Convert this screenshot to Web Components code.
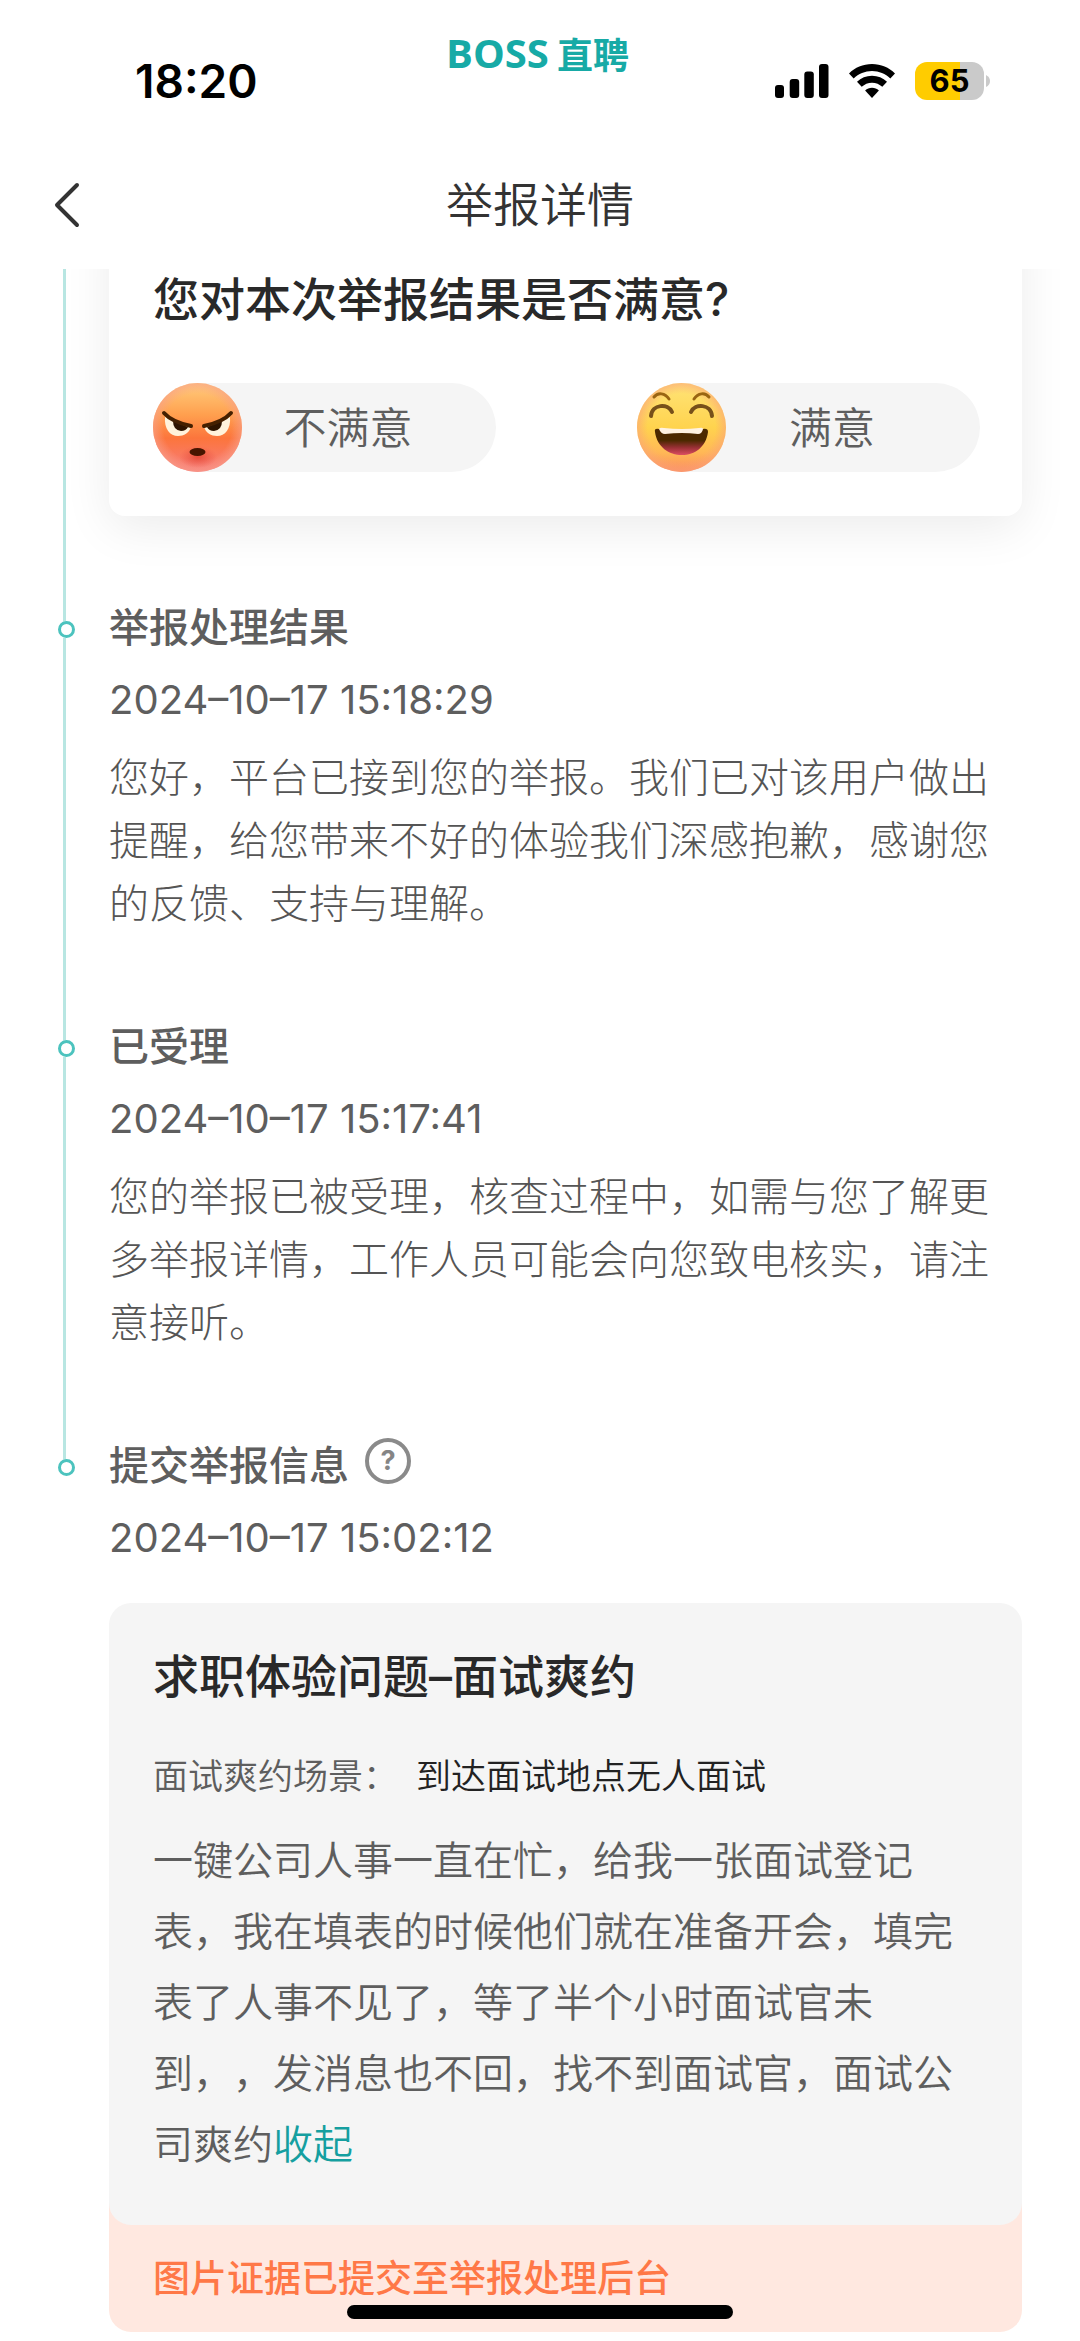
<!DOCTYPE html>
<html lang="zh-CN">
<head>
<meta charset="utf-8">
<meta name="viewport" content="width=device-width, initial-scale=1">
<title>举报详情</title>
<style>
  body {
    margin: 0;
    background: #fff;
    color: #5e5e5e;
    font-family: Inter, "Noto Sans CJK SC", sans-serif;
    font-size: 40px;
    text-spacing-trim: space-all;
  }
</style>
</head>
<body>
<report-page></report-page>

<script>
const define = (name, html) => {
  const tpl = document.createElement('template');
  tpl.innerHTML = `<style>*{box-sizing:border-box}h1,h2,p{margin:0}button{font:inherit;color:inherit;border:0;padding:0;background:none;cursor:pointer}svg{display:block}</style>` + html;
  customElements.define(name, class extends HTMLElement {
    constructor() {
      super();
      this.attachShadow({ mode: 'open' }).append(tpl.content.cloneNode(true));
    }
  });
};

define('status-bar', `
<style>
  :host { display: grid; grid-template-columns: 1fr auto 1fr; align-items: center; height: 141px; padding: 20px 90px 0 135px; color: #000; }
  time { font-size: 46px; font-weight: 600; line-height: 60px; }
  .brand { align-self: start; display: flex; gap: 8px; line-height: 66px; color: #17aaa6; font-weight: 700; margin-right: 50px; }
  .latin { font-family: "Open Sans", sans-serif; font-size: 40px; }
  .han { font-family: "Noto Sans CJK SC", sans-serif; font-size: 36px; }
  .icons { display: flex; align-items: center; justify-content: flex-end; gap: 20px; }
  .battery { display: flex; align-items: center; gap: 2px; }
  .level { width: 69px; height: 38px; border-radius: 12px; background: linear-gradient(90deg, #ffcc00 65%, #cacaca 65%); font-size: 31px; font-weight: 700; line-height: 38px; text-align: center; }
</style>
<time>18:20</time>
<div class="brand"><span class="latin">BOSS</span><span class="han">直聘</span></div>
<div class="icons">
  <svg width="54" height="34" viewBox="0 0 54 34"><rect x="0" y="21" width="9" height="13" rx="3"/><rect x="14.700" y="15" width="9.500" height="19" rx="3"/><rect x="29.300" y="7.500" width="9.500" height="26.500" rx="3"/><rect x="44" y="0" width="9.500" height="34" rx="3"/></svg>
  <svg width="46" height="34" viewBox="0 0 46 34"><path d="M23 0C32 0 40 3.500 46 9.500L41.300 14.500C36.500 9.800 30 7 23 7S9.500 9.800 4.700 14.500L0 9.500C6 3.500 14 0 23 0Z"/><path d="M23 11.800C28.800 11.800 34 14 38 17.800L33.300 22.800C30.500 20.300 27 18.700 23 18.700S15.500 20.300 12.700 22.800L8 17.800C12 14 17.200 11.800 23 11.800Z"/><path d="M23 23.700C25.600 23.700 28 24.700 29.900 26.500L23 34L16.100 26.500C18 24.700 20.400 23.700 23 23.700Z"/></svg>
  <div class="battery"><div class="level">65</div><svg width="4" height="12" viewBox="0 0 4 12"><path d="M0 0Q4 2 4 6T0 12Z" fill="#cacaca"/></svg></div>
</div>`);

define('nav-bar', `
<style>
  :host { display: grid; grid-template-columns: 1fr auto 1fr; align-items: center; height: 128px; padding: 0 50px; color: #333; }
  h1 { font-size: 47px; font-weight: 350; line-height: 64px; }
  button { width: 44px; height: 64px; display: flex; align-items: center; }
</style>
<button type="button" aria-label="返回"><svg width="34" height="46" viewBox="0 0 34 46" fill="none" stroke="#333" stroke-width="4" stroke-linecap="round" stroke-linejoin="round"><path d="M27 3L7 23L27 43"/></svg></button>
<h1><slot></slot></h1>`);

define('timeline-item', `
<style>
  :host { display: grid; grid-template-columns: 17px minmax(0, 1fr); column-gap: 34px; padding: 0 58px; }
  .rail { display: flex; flex-direction: column; }
  .rail::before, .rail::after { content: ""; width: 3px; margin-left: 5px; background: #b8e6e2; }
  .rail::before { height: 21px; }
  .rail::after { flex: 1; }
  .dot { width: 17px; height: 17px; border: 3px solid #4cc3be; border-radius: 50%; background: #fff; }
  .content { padding-bottom: 84px; }
  :host([plain]) .dot { display: none; }
  :host([last]) .rail::after { display: none; }
  :host([last]) .content { padding-bottom: 10px; }
</style>
<div class="rail"><span class="dot"></span></div>
<div class="content"><slot></slot></div>`);

define('step-head', `
<style>
  :host { display: block; }
  .title { display: flex; align-items: flex-start; gap: 16px; margin-bottom: 16px; }
  h2 { font-size: 40px; font-weight: 500; line-height: 56px; }
  time { display: block; line-height: 56px; }
</style>
<div class="title"><h2><slot></slot></h2><slot name="extra"></slot></div>
<time><slot name="time"></slot></time>`);

define('help-button', `
<style>
  :host { display: block; }
  button { display: block; width: 46px; height: 46px; border: 4px solid #8a8a8a; border-radius: 50%; color: #858585; font-size: 27px; font-weight: 700; line-height: 38px; text-align: center; }
</style>
<button type="button" aria-label="帮助">?</button>`);

define('step-note', `
<style>
  :host { display: block; margin-top: 18px; font-weight: 300; line-height: 63px; color: #555; }
</style>
<p><slot></slot></p>`);

define('face-button', `
<style>
  :host { display: block; flex: 0 1 343px; }
  button { display: flex; align-items: center; width: 100%; height: 89px; padding-right: 42px; border-radius: 45px; background: #f5f5f5; font-size: 43px; font-weight: 350; line-height: 60px; }
  .label { flex: 1; text-align: center; }
</style>
<button type="button"><slot name="face"></slot><span class="label"><slot></slot></span></button>`);

define('angry-face', `
<style>:host { display: block; width: 89px; }</style>
<svg width="89" height="89" viewBox="0 0 89 89">
  <defs>
    <linearGradient id="skin" x2="0" y2="1"><stop offset="0" stop-color="#ffcd7c"/><stop offset=".36" stop-color="#ff9f4e"/><stop offset=".62" stop-color="#fc753c"/><stop offset="1" stop-color="#f77d80"/></linearGradient>
    <radialGradient id="rim"><stop offset=".76" stop-color="#f9a08a" stop-opacity="0"/><stop offset="1" stop-color="#f9a08a" stop-opacity=".65"/></radialGradient>
    <radialGradient id="chin"><stop offset="0" stop-color="#dd3f30" stop-opacity=".75"/><stop offset="1" stop-color="#e84d3d" stop-opacity="0"/></radialGradient>
  </defs>
  <circle cx="44.500" cy="44.500" r="44.500" fill="url(#skin)"/><circle cx="44.500" cy="44.500" r="44.500" fill="url(#rim)"/>
  <ellipse cx="45" cy="74" rx="19" ry="11" fill="url(#chin)"/>
  <path d="M12 34L38 44C36 50 31 53 25 53C17 53 11 46 12 34Z" fill="#fff3dc"/>
  <path d="M77 34L51 44C53 50 58 53 64 53C72 53 78 46 77 34Z" fill="#fff3dc"/>
  <path d="M20 38L35 44Q33 48 28 48Q20 47 20 38Z" fill="#2e1400"/><path d="M69 38L54 44Q56 48 61 48Q69 47 69 38Z" fill="#2e1400"/>
  <path d="M11 30Q19 39 38 43M78 30Q70 39 51 43" fill="none" stroke="#452000" stroke-width="4" stroke-linecap="round"/>
  <ellipse cx="44.500" cy="69" rx="8" ry="4" fill="#461500"/>
</svg>`);

define('happy-face', `
<style>:host { display: block; width: 89px; }</style>
<svg width="89" height="89" viewBox="0 0 89 89">
  <defs>
    <linearGradient id="skin" x2="0" y2="1"><stop offset="0" stop-color="#ffe477"/><stop offset=".5" stop-color="#ffd34e"/><stop offset=".78" stop-color="#ffb856"/><stop offset="1" stop-color="#fb8b5f"/></linearGradient>
    <radialGradient id="rim"><stop offset=".76" stop-color="#fba27a" stop-opacity="0"/><stop offset="1" stop-color="#fba27a" stop-opacity=".6"/></radialGradient>
    <linearGradient id="mouth" x2="0" y2="1"><stop offset=".45" stop-color="#4c2900"/><stop offset=".72" stop-color="#9a3035"/><stop offset="1" stop-color="#dc4e62"/></linearGradient>
  </defs>
  <circle cx="44.500" cy="44.500" r="44.500" fill="url(#skin)"/><circle cx="44.500" cy="44.500" r="44.500" fill="url(#rim)"/>
  <path d="M17 14C21 9 28 10 32 16M57 16C61 10 68 9 72 14" fill="none" stroke="#9a6512" stroke-width="3" stroke-linecap="round"/>
  <path d="M14 33C15 21 31 20 35 29M54 29C58 20 74 21 75 33" fill="none" stroke="#77501a" stroke-width="4" stroke-linecap="round"/>
  <path d="M18 49Q17 45 22 46Q45 50 66 46Q71 45 71 49C69 64 58 72 45 72S20 64 18 49Z" fill="url(#mouth)"/>
  <path d="M22 46Q23 44 27 45Q45 47 62 45Q66 44 66 46Q65 51 61 51Q45 49 28 51Q24 51 22 46Z" fill="#fff2e2"/>
</svg>`);

/* The card starts above the scroll port, so its top edge and corners stay out of view. */
define('survey-card', `
<style>
  :host { display: block; margin-top: -60px; padding: 60px 42px 44px 44px; border-radius: 16px; background: #fff; box-shadow: 0 12px 48px rgba(0, 0, 0, .08); }
  h2 { color: #292929; font-size: 46px; font-weight: 500; line-height: 60px; margin-bottom: 54px; }
  .options { display: flex; justify-content: space-between; gap: 24px; }
</style>
<h2>您对本次举报结果是否满意?</h2>
<div class="options">
  <face-button><angry-face slot="face"></angry-face>不满意</face-button>
  <face-button><happy-face slot="face"></happy-face>满意</face-button>
</div>`);

define('report-card', `
<style>
  :host { display: block; margin-top: 37px; }
  .body { position: relative; padding: 43px 44px 45px; border-radius: 22px; background: #f5f5f5; }
  h2 { color: #292929; font-size: 46px; font-weight: 500; line-height: 60px; margin-bottom: 45px; }
  .scene { display: flex; gap: 18px; font-size: 35px; font-weight: 350; line-height: 50px; margin-bottom: 24px; }
  .scene b { color: #222; font-weight: 350; }
  .text { font-weight: 350; line-height: 71px; }
  a { color: #159fa0; text-decoration: none; }
  .notice { margin-top: -24px; padding: 51px 44px 26px; border-radius: 0 0 22px 22px; background: #ffe8e0; color: #ff7847; font-size: 37px; font-weight: 500; line-height: 54px; }
</style>
<div class="body">
  <h2>求职体验问题–面试爽约</h2>
  <div class="scene"><span>面试爽约场景：</span><b>到达面试地点无人面试</b></div>
  <p class="text"><span>一键公司人事一直在忙，给我一张面试登记表，我在填表的时候他们就在准备开会，填完表了人事不见了，等了半个小时面试官未到，，发消息也不回，找不到面试官，面试公司爽约</span><a href="#collapse">收起</a></p>
</div>
<p class="notice">图片证据已提交至举报处理后台</p>`);

define('home-indicator', `
<style>
  :host { position: fixed; left: 0; right: 0; bottom: 22px; display: flex; justify-content: center; z-index: 2; pointer-events: none; }
  span { width: 386px; height: 14px; border-radius: 7px; background: #000; }
</style>
<span></span>`);

define('report-page', `
<style>
  :host { display: block; }
  main { overflow: clip; }
</style>
<status-bar></status-bar>
<nav-bar>举报详情</nav-bar>
<main>
  <timeline-item plain><survey-card></survey-card></timeline-item>
  <timeline-item>
    <step-head>举报处理结果<span slot="time">2024–10–17 15:18:29</span></step-head>
    <step-note>您好，平台已接到您的举报。我们已对该用户做出提醒，给您带来不好的体验我们深感抱歉，感谢您的反馈、支持与理解。</step-note>
  </timeline-item>
  <timeline-item>
    <step-head>已受理<span slot="time">2024–10–17 15:17:41</span></step-head>
    <step-note>您的举报已被受理，核查过程中，如需与您了解更多举报详情，工作人员可能会向您致电核实，请注意接听。</step-note>
  </timeline-item>
  <timeline-item last>
    <step-head>提交举报信息<help-button slot="extra"></help-button><span slot="time">2024–10–17 15:02:12</span></step-head>
    <report-card></report-card>
  </timeline-item>
</main>
<home-indicator></home-indicator>`);
</script>
</body>
</html>
